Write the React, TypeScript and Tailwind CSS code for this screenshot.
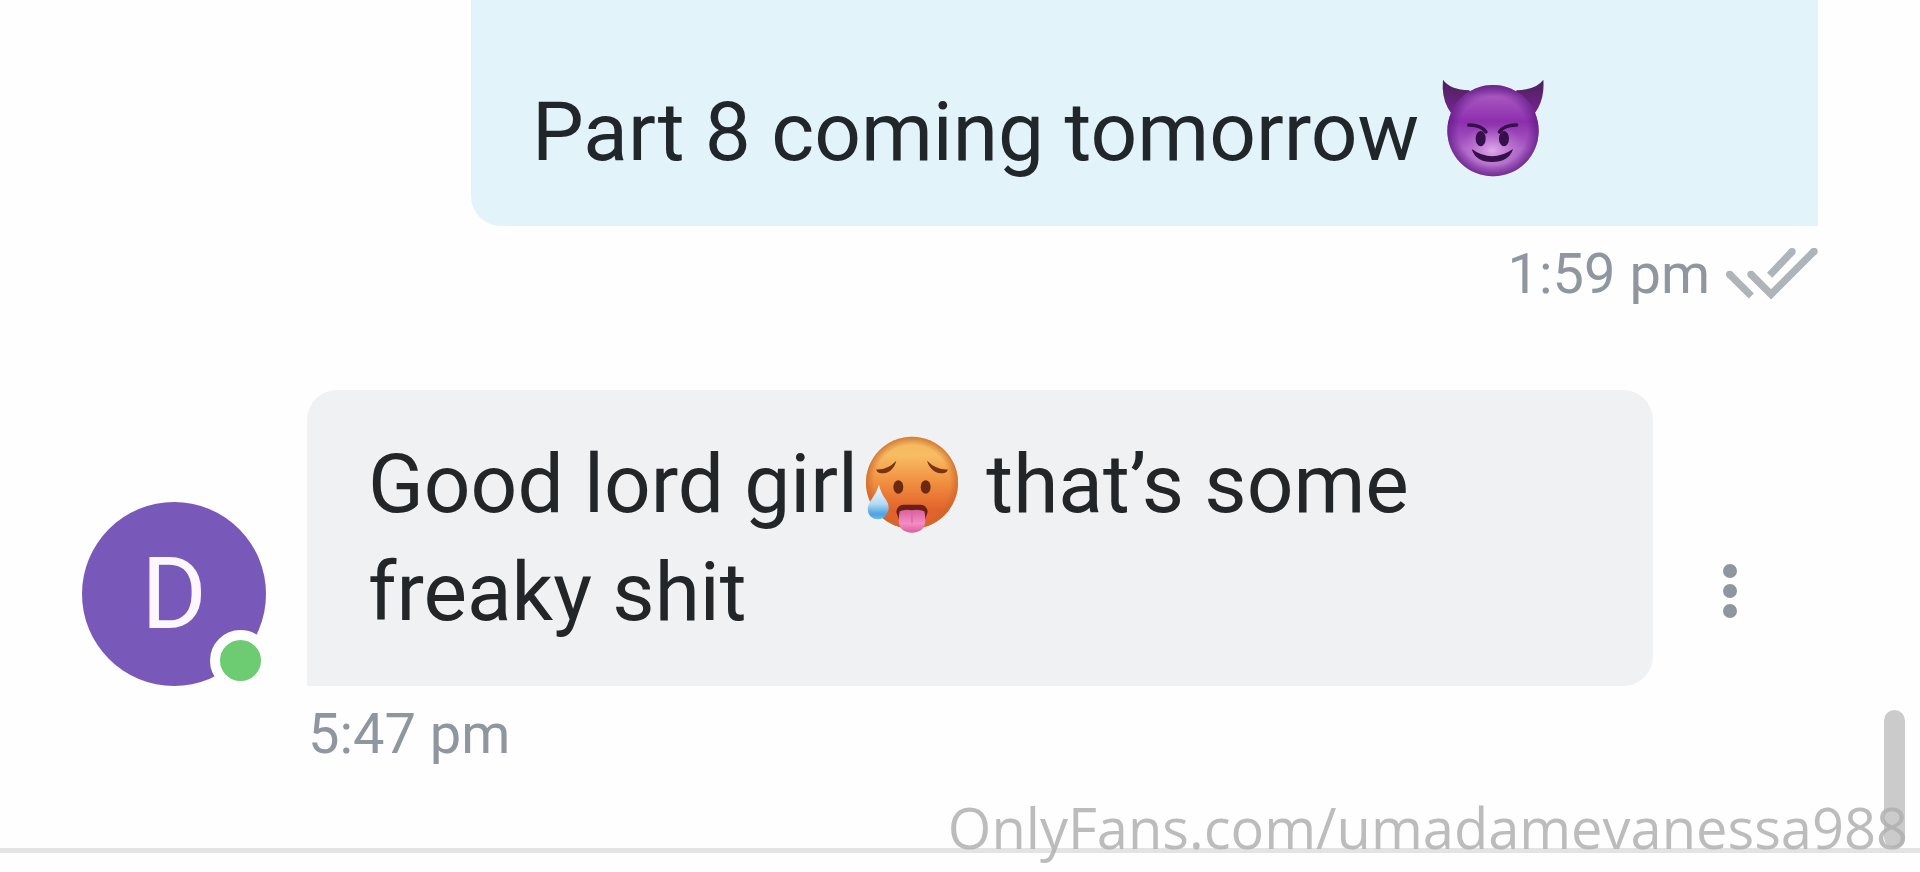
import type { ReactNode } from 'react'

function DevilEmoji() {
  return (
    <svg
      role="img"
      aria-label="smiling face with horns"
      viewBox="61 51 312 312"
      className="mx-[2px] inline-block size-[104px] overflow-visible align-[-22px]"
    >
      <defs>
        <linearGradient id="devil-face" x1="0" y1="0" x2="0" y2="1">
          <stop offset="0" stopColor="#8a3fa6" />
          <stop offset="0.12" stopColor="#a855c0" />
          <stop offset="0.4" stopColor="#8d2fae" />
          <stop offset="0.7" stopColor="#a95fc4" />
          <stop offset="1" stopColor="#a45cc0" />
        </linearGradient>
        <radialGradient id="devil-edge" cx="0.5" cy="0.5" r="0.5">
          <stop offset="0.75" stopColor="#5c1880" stopOpacity="0" />
          <stop offset="1" stopColor="#5c1880" stopOpacity="0.7" />
        </radialGradient>
        <radialGradient id="devil-glow" cx="0.5" cy="0.5" r="0.5">
          <stop offset="0" stopColor="#dfa8ea" />
          <stop offset="1" stopColor="#c07ad4" stopOpacity="0" />
        </radialGradient>
        <linearGradient id="devil-horn" x1="0" y1="0" x2="0" y2="1">
          <stop offset="0" stopColor="#4a2158" />
          <stop offset="1" stopColor="#7c2496" />
        </linearGradient>
      </defs>
      <path d="M67 56 Q88 86 146 88 L170 130 L100 170 L82 142 Q62 105 67 56Z" fill="url(#devil-horn)" />
      <path d="M368 56 Q347 86 288 88 L264 130 L334 170 L352 142 Q372 105 368 56Z" fill="url(#devil-horn)" />
      <circle cx="217" cy="209" r="137" fill="url(#devil-face)" />
      <ellipse cx="215" cy="268" rx="105" ry="76" fill="url(#devil-glow)" />
      <circle cx="217" cy="209" r="137" fill="url(#devil-edge)" />
      <g fill="#35104a">
        <ellipse cx="180" cy="233" rx="15" ry="23" />
        <ellipse cx="250" cy="233" rx="15" ry="23" />
        <path d="M153 264 Q214 308 277 264 Q265 303 214 303 Q165 303 153 264Z" />
      </g>
      <g fill="none" stroke="#35104a" strokeWidth="10" strokeLinecap="round">
        <path d="M144 192 Q180 191 196 213" />
        <path d="M288 192 Q252 191 236 213" />
      </g>
    </svg>
  )
}

function HotEmoji() {
  return (
    <svg
      role="img"
      aria-label="hot face"
      viewBox="59 30 312 312"
      className="mx-[2px] inline-block size-[104px] overflow-visible align-[-22px]"
    >
      <defs>
        <linearGradient id="hot-face" x1="0" y1="0" x2="0" y2="1">
          <stop offset="0" stopColor="#f0b75c" />
          <stop offset="0.2" stopColor="#f8bd63" />
          <stop offset="0.5" stopColor="#f08f40" />
          <stop offset="0.8" stopColor="#e2622c" />
          <stop offset="1" stopColor="#e8642e" />
        </linearGradient>
        <radialGradient id="hot-edge" cx="0.5" cy="0.5" r="0.5">
          <stop offset="0.82" stopColor="#c9662a" stopOpacity="0" />
          <stop offset="1" stopColor="#c9662a" stopOpacity="0.75" />
        </radialGradient>
        <linearGradient id="hot-drop" x1="0" y1="0" x2="0" y2="1">
          <stop offset="0.1" stopColor="#eef6fb" />
          <stop offset="0.55" stopColor="#b5daf2" />
          <stop offset="0.85" stopColor="#4aa3e0" />
          <stop offset="1" stopColor="#6fb8e4" />
        </linearGradient>
        <linearGradient id="hot-tongue" x1="0" y1="0" x2="0" y2="1">
          <stop offset="0" stopColor="#d9609c" />
          <stop offset="0.6" stopColor="#f58cc4" />
          <stop offset="1" stopColor="#d85f9c" />
        </linearGradient>
      </defs>
      <circle cx="215" cy="188" r="138" fill="url(#hot-face)" />
      <circle cx="215" cy="188" r="138" fill="url(#hot-edge)" />
      <ellipse cx="174" cy="201" rx="15" ry="20" fill="#6b2a10" />
      <ellipse cx="256" cy="201" rx="15" ry="20" fill="#6b2a10" />
      <g fill="#7a3413">
        <path d="M108 148 Q142 150 168 122 Q158 160 122 160 Q108 158 108 148Z" />
        <path d="M260 122 Q288 150 322 148 Q322 158 308 160 Q272 160 260 122Z" />
      </g>
      <path d="M168 276 Q170 254 192 254 H238 Q260 254 262 276 L254 300 H176Z" fill="#6a1f17" />
      <path
        d="M178 274 Q195 266 215 271 Q235 266 252 274 Q256 292 255 304 Q252 338 215 338 Q178 338 175 304 Q175 290 178 274Z"
        fill="url(#hot-tongue)"
      />
      <path d="M215 276 V308" stroke="#d9649f" strokeWidth="4" strokeLinecap="round" />
      <path
        d="M116 194 Q120 216 136 238 Q152 262 140 281 Q130 298 111 298 Q92 297 84 279 Q78 259 94 238 Q110 216 116 194Z"
        fill="url(#hot-drop)"
      />
    </svg>
  )
}

function DoubleCheck() {
  return (
    <svg
      role="img"
      aria-label="Read"
      viewBox="738 78 276 156"
      className="h-[52px] w-[92px]"
      fill="none"
      stroke="#afb4ba"
      strokeWidth="22"
    >
      <path d="M749 157 L814 222 M813 157 L873 217 L1002 88 M869 160 L936 89" />
      <g fill="#afb4ba" stroke="none">
        <circle cx="749" cy="157" r="11" />
        <circle cx="813" cy="157" r="11" />
        <circle cx="1002" cy="88" r="11" />
        <circle cx="936" cy="89" r="11" />
      </g>
    </svg>
  )
}

function Time({ children }: { children: ReactNode }) {
  return <time className="text-[56px] leading-[72px] text-[#8f969f]">{children}</time>
}

function Avatar() {
  return (
    <div className="relative flex size-[184px] shrink-0 items-center justify-center rounded-full bg-[#7858b8] text-[100px] leading-none text-[#fbf6ff]">
      D
      <span className="absolute -right-[5px] -bottom-[5px] size-[61px] rounded-full border-10 border-[#fefefe] bg-[#6dcc71]" />
    </div>
  )
}

export default function App() {
  return (
    <main className="relative min-h-screen overflow-hidden bg-[#fefefe] font-['Roboto',sans-serif]">
      <section className="flex flex-col border-b-[5px] border-[#e3e3e3] pb-[78px]">
        <div className="flex flex-col pr-[102px] pl-[471px]">
          <p className="rounded-bl-[30px] bg-[#e2f3fa] px-[61px] pt-[78px] pb-10 text-[82px] leading-[108px] text-[#21262b]">
            Part 8 coming tomorrow <DevilEmoji />
          </p>
          <div className="flex items-center justify-end gap-4 pt-3">
            <Time>1:59 pm</Time>
            <DoubleCheck />
          </div>
        </div>

        <div className="flex items-end pt-20 pr-[160px] pl-[82px]">
          <Avatar />
          <p className="ml-[41px] flex-1 rounded-t-[30px] rounded-br-[30px] bg-[#f0f1f3] px-[61px] py-10 text-[82px] leading-[108px] text-[#222629]">
            Good lord girl
            <HotEmoji /> that’s some
            <br />
            freaky shit
          </p>
          <button
            type="button"
            aria-label="Message options"
            className="ml-[47px] flex h-[190px] w-[60px] flex-col items-center justify-center gap-[6px]"
          >
            <span className="size-[14px] rounded-full bg-[#8f969f]" />
            <span className="size-[14px] rounded-full bg-[#8f969f]" />
            <span className="size-[14px] rounded-full bg-[#8f969f]" />
          </button>
        </div>
        <div className="flex pt-3 pl-[308px]">
          <Time>5:47 pm</Time>
        </div>
      </section>

      {/* scroll thumb and watermark lie over the chat */}
      <div className="absolute right-[15px] bottom-[24px] h-[138px] w-[21px] rounded-full bg-[#cbcbcb]" />
      <div className="absolute right-3 bottom-[9px] font-['Open_Sans',sans-serif] text-[56px] leading-[72px] whitespace-nowrap text-[#b0b0b0]/85">
        OnlyFans.com/umadamevanessa988
      </div>
    </main>
  )
}
